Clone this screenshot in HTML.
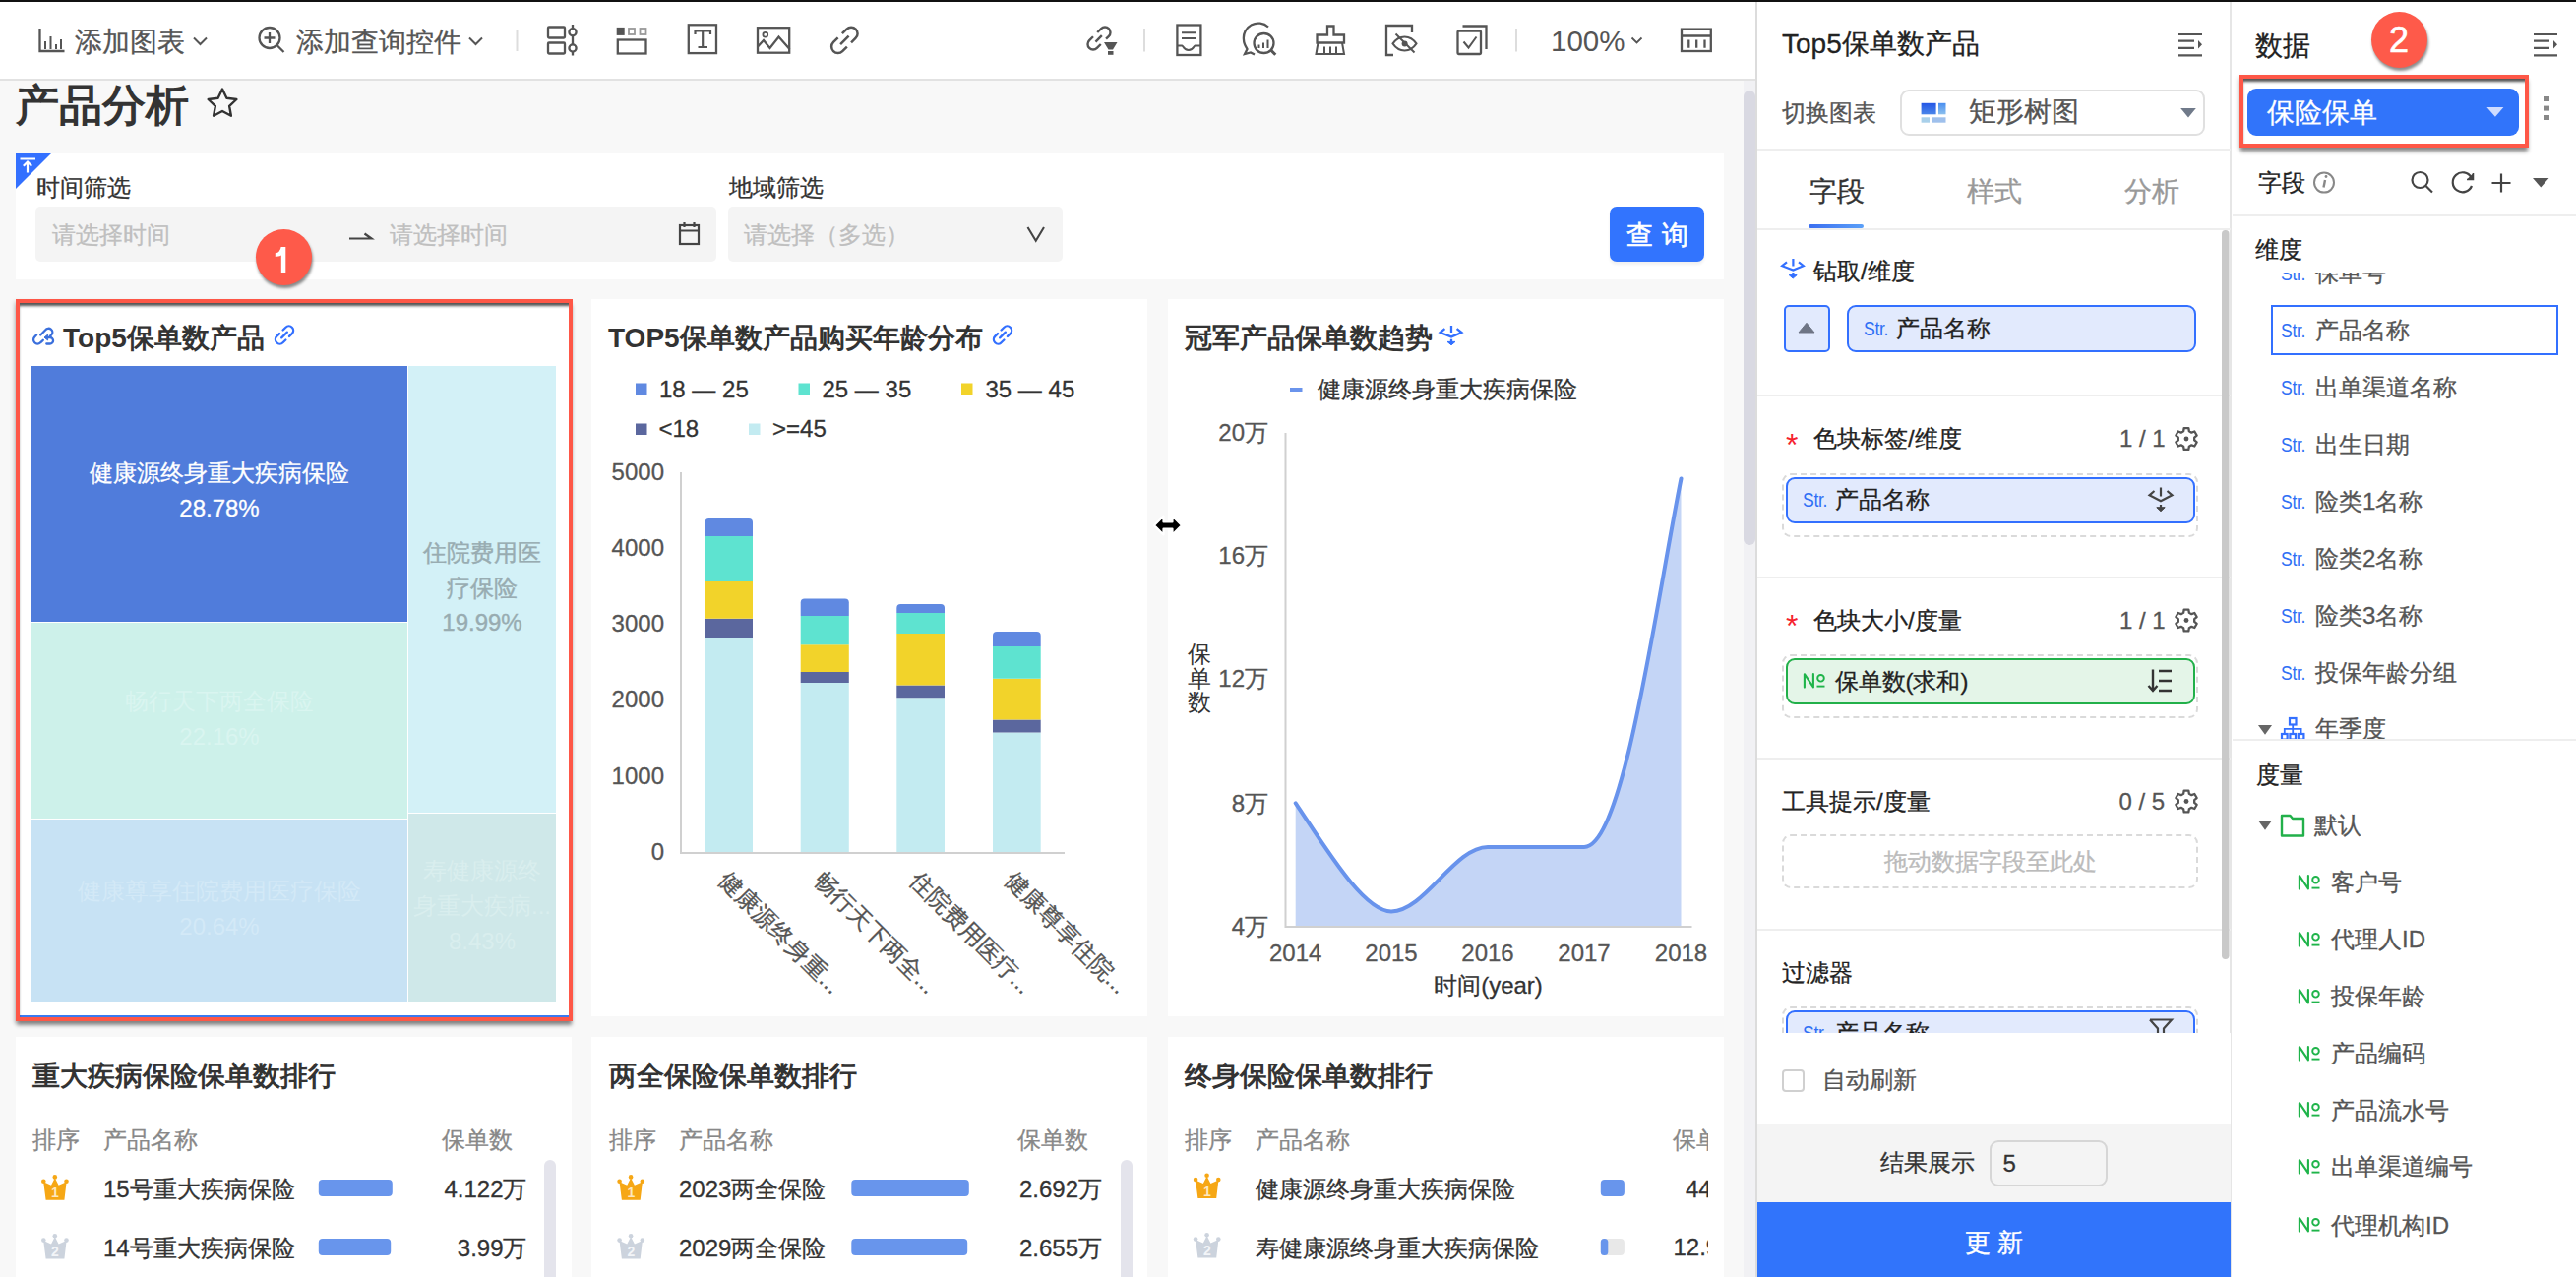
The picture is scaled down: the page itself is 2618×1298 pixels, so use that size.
<!DOCTYPE html>
<html><head><meta charset="utf-8">
<style>
*{box-sizing:border-box;margin:0;padding:0}
html,body{width:2618px;height:1298px;overflow:hidden;background:#f8f8f8;font-family:"Liberation Sans",sans-serif;color:#333}
.a{position:absolute;white-space:nowrap}
svg{position:absolute;overflow:visible}
.t24{font-size:24px;line-height:40px;-webkit-text-stroke:0.3px currentColor}
.t28{font-size:28px;line-height:40px;-webkit-text-stroke:0.3px currentColor}
.b{font-weight:bold;-webkit-text-stroke:0}
.card{position:absolute;background:#fff}
.str{color:#2f6ff5;font-size:20px;letter-spacing:-0.4px;transform:scaleX(0.88);transform-origin:0 50%}
.no{color:#1fb44a;font-size:20px}
</style></head><body>
<!-- top black line -->
<div class="a" style="left:0;top:0;width:2618px;height:2px;background:#111"></div>
<!-- toolbar -->
<div class="a" style="left:0;top:2px;width:1784px;height:78px;background:#fff"></div>
<div class="a" style="left:0;top:80px;width:1784px;height:2px;background:#e2e2e2"></div>
<svg style="left:0;top:0" width="1784" height="82" viewBox="0 0 1784 82" fill="none" stroke="#555" stroke-width="2.3">
 <!-- bar chart icon -->
 <path d="M40.5 29v23h25" />
 <path d="M46 42v8M51.5 37v13M57 45v5M62 40v10" stroke-width="2"/>
 <!-- chevron 1 -->
 <path d="M197 38.5l6.5 6.5 6.5-6.5" stroke-width="2"/>
 <!-- zoom-in -->
 <circle cx="274" cy="38.5" r="10.5"/>
 <path d="M281.5 46l7 7M274 33v11M268.5 38.5h11"/>
 <path d="M477 38.5l6.5 6.5 6.5-6.5" stroke-width="2"/>
 <!-- separator -->
 <path d="M525.5 30v22" stroke="#ddd" stroke-width="2"/>
 <!-- icon filter rows -->
 <rect x="557" y="27.5" width="17" height="11" rx="1"/>
 <rect x="557" y="43.5" width="17" height="11" rx="1"/>
 <path d="M582 25v31.5"/>
 <circle cx="582" cy="32.7" r="3.6" fill="#fff"/>
 <circle cx="582" cy="49" r="3.6" fill="#fff"/>
 <!-- tabs icon -->
 <rect x="626.7" y="27.9" width="8" height="8" fill="#555" stroke="none"/>
 <rect x="639" y="29" width="6" height="6" stroke="#999" stroke-width="1.8"/>
 <rect x="650.5" y="29" width="6" height="6" stroke="#999" stroke-width="1.8"/>
 <rect x="627.8" y="40.5" width="28.7" height="14" />
 <!-- T icon -->
 <rect x="699.8" y="25.3" width="28.2" height="28.8"/>
 <path d="M706.5 35v-3.5h15.5v3.5M714.2 31.5v16.5M709.5 48h9.5" stroke-width="2.2"/>
 <!-- image icon -->
 <rect x="770" y="28.2" width="32.2" height="25.5"/>
 <circle cx="777.8" cy="35.3" r="2.4" stroke-width="1.8"/>
 <path d="M770 47.5l6-6.5 6.5 8 9-11.5 11 12.5"/>
 <!-- link icon -->
 <g transform="translate(858 40.5) rotate(-45)">
  <path d="M-3 -6h-6.5a6.5 6.5 0 0 0 0 13h6.5M3 -6h6.5a6.5 6.5 0 0 1 0 13h-6.5M-6 0.5h12" stroke-width="2.5"/>
 </g>
 <!-- link-filter -->
 <g transform="translate(1117 39) rotate(-45)">
  <path d="M-3 -5.5h-5.5a5.5 5.5 0 0 0 0 11h5.5M3 -5.5h5.5a5.5 5.5 0 0 1 0 11h-4M-5 0h9" stroke-width="2.4"/>
 </g>
 <path d="M1122 43h13.5l-4.5 7.5h-4.5z" fill="#555" stroke="none"/>
 <rect x="1126" y="52" width="5.5" height="3.8" fill="#555" stroke="none"/>
 <path d="M1163 29v23.5" stroke="#ddd" stroke-width="2"/>
 <!-- doc -->
 <rect x="1196.4" y="25.5" width="24" height="30.5"/>
 <path d="M1201 33.3h15M1201 39h15" stroke-width="2"/>
 <path d="M1196.4 46.5h5c1 0 1.5 4.5 6.5 4.5s5.5-4.5 6.5-4.5h6" stroke-width="2"/>
 <!-- chat analysis -->
 <path d="M1289 27.5a15 15 0 0 0 -25 13c0 4 2 7 3.5 9.5l-2.5 5 6-1.5 4 2" />
 <circle cx="1284.5" cy="44" r="10"/>
 <path d="M1291.8 51.3l4.5 4.5" stroke-width="3"/>
 <path d="M1279.5 45.5v3.5M1284 43.5v5.5M1288.5 40.5v8.5" stroke-width="2"/>
 <!-- broom -->
 <path d="M1349 26.5h6.5v9h10.5v8h-27.5v-8h10.5z"/>
 <path d="M1339.5 43.5l-2 11.5h28.5l-2-11.5M1346 47.5v7.5M1352 47.5v7.5M1358 47.5v7.5" stroke-width="2"/>
 <!-- eye-off -->
 <path d="M1416 56h-7v-30h26v7" />
 <path d="M1415.5 44.4c3-4.5 7.5-7 12-7s9 2.5 12 7c-3 4.5-7.5 7-12 7s-9-2.5-12-7z" stroke-width="2"/>
 <circle cx="1427.6" cy="44.4" r="3" fill="#555" stroke="none"/>
 <path d="M1418.5 34.5l19 19" stroke-width="2"/>
 <!-- check copy -->
 <path d="M1486.5 26.5h24v23.5"/>
 <rect x="1481.5" y="31.5" width="23.5" height="23.5" rx="1"/>
 <path d="M1487.5 42.5l5 6 8-11" stroke-width="2"/>
 <path d="M1541 29v23.5" stroke="#ddd" stroke-width="2"/>
 <path d="M1658.5 38.5l5 5 5-5" stroke-width="1.8"/>
 <!-- table icon -->
 <rect x="1709" y="29.6" width="29.8" height="22.4"/>
 <path d="M1709 36.5h29.8M1716.3 40.6v8.2M1724.2 40.6v8.2M1732.5 40.6v8.2"/>
</svg>
<div class="a t28" style="left:76px;top:22.5px;color:#555">添加图表</div>
<div class="a t28" style="left:300.5px;top:22.5px;color:#555">添加查询控件</div>
<div class="a" style="left:1576px;top:21.5px;font-size:29.5px;line-height:40px;color:#555">100%</div>

<!-- main scrollbar -->
<div class="a" style="left:1772px;top:82px;width:12px;height:1216px;background:#f1f1f4"></div>
<div class="a" style="left:1772px;top:92px;width:12px;height:462px;border-radius:6px;background:#d9d9e2"></div>
<!-- page title -->
<div class="a b" style="left:16px;top:76.5px;font-size:44px;line-height:60px;color:#333">产品分析</div>
<svg style="left:0;top:0" width="300" height="140"><path d="M226 90.5l4.4 9.2 10 1.3-7.3 6.9 1.8 9.9-8.9-4.8-8.9 4.8 1.8-9.9-7.3-6.9 10-1.3z" fill="none" stroke="#333" stroke-width="2.4" stroke-linejoin="round"/></svg>
<!-- filter card -->
<div class="card" style="left:16px;top:156px;width:1736px;height:128px"></div>
<svg style="left:16px;top:156px" width="40" height="40"><path d="M0 0h36L0 36z" fill="#3370ff"/><path d="M4.5 5.5h15.5M12 19.5v-11M7.8 12.7l4.2-4.2 4.2 4.2" stroke="#fff" stroke-width="2.2" fill="none"/></svg>
<div class="a t24" style="left:37px;top:171px;color:#333">时间筛选</div>
<div class="a" style="left:36px;top:210px;width:692px;height:56px;background:#f4f4f4;border-radius:5px"></div>
<div class="a t24" style="left:52.5px;top:219px;color:#bfbfbf">请选择时间</div>
<div class="a t24" style="left:396px;top:219px;color:#bfbfbf">请选择时间</div>
<svg style="left:0;top:200px" width="760" height="80" fill="none" stroke="#444" stroke-width="2.2">
 <path d="M355 42.5h22.5l-7-5"/>
 <rect x="691" y="29" width="19" height="19" stroke-width="2.2"/>
 <path d="M691 34.5h19M695.5 26v5M705.5 26v5" stroke-width="2.2"/>
</svg>
<div class="a t24" style="left:741px;top:171px;color:#333">地域筛选</div>
<div class="a" style="left:740px;top:210px;width:340px;height:56px;background:#f4f4f4;border-radius:5px"></div>
<div class="a t24" style="left:756px;top:219px;color:#bfbfbf">请选择（多选）</div>
<svg style="left:1040px;top:225px" width="30" height="30"><path d="M4.5 6l8.25 13.8 8.25-13.8" fill="none" stroke="#444" stroke-width="2.1"/></svg>
<div class="a" style="left:1636px;top:210px;width:96px;height:56px;background:#3274fe;border-radius:7px;box-shadow:0 3px 3px rgba(0,0,0,0.06)"></div>
<div class="a" style="left:1636px;top:218.5px;width:96px;text-align:center;font-size:27px;line-height:40px;color:#fff;letter-spacing:9px;text-indent:9px;-webkit-text-stroke:0.6px #fff">查询</div>

<!-- ===== CARD 1: treemap ===== -->
<div class="card" style="left:16px;top:304px;width:566px;height:734px"></div>
<div class="a" style="left:32px;top:372px;width:382px;height:260px;background:#507cdb"></div>
<div class="a" style="left:415px;top:372px;width:150px;height:454px;background:#d3f1f7"></div>
<div class="a" style="left:32px;top:633px;width:382px;height:199px;background:#cdf1ea"></div>
<div class="a" style="left:32px;top:833px;width:382px;height:185px;background:#c7e2f4"></div>
<div class="a" style="left:415px;top:827px;width:150px;height:191px;background:#cfe8e9"></div>
<div class="a" style="left:32px;top:462.5px;width:382px;text-align:center;font-size:24px;line-height:36px;color:#fff;-webkit-text-stroke:0.3px #fff">健康源终身重大疾病保险<br>28.78%</div>
<div class="a" style="left:415px;top:544px;width:150px;text-align:center;font-size:24px;line-height:35.7px;color:#98acb1;white-space:normal;-webkit-text-stroke:0.4px currentColor">住院费用医<br>疗保险<br>19.99%</div>
<div class="a" style="left:32px;top:694.5px;width:382px;text-align:center;font-size:24px;line-height:36px;color:#d9f5f0">畅行天下两全保险<br>22.16%</div>
<div class="a" style="left:32px;top:888px;width:382px;text-align:center;font-size:24px;line-height:36px;color:#d3e9f7">健康尊享住院费用医疗保险<br>20.64%</div>
<div class="a" style="left:415px;top:867px;width:150px;text-align:center;font-size:24px;line-height:36px;color:#d9eeee">寿健康源终<br>身重大疾病...<br>8.43%</div>
<div class="a" style="left:20px;top:1032px;width:558px;height:2px;background:#3a7af0"></div>
<div class="a b t28" style="left:64px;top:323.5px;color:#333">Top5保单数产品</div>
<svg style="left:0;top:300px" width="320" height="70" fill="none" stroke="#3a6fdc" stroke-width="2.3" stroke-linecap="round">
 <path d="M41.2 40.5L46.3 35.3a3.9 3.9 0 0 1 6.2 4.8L51 41.6"/>
 <path d="M37.2 40.2L35.3 42.4a4 4 0 0 0 5.8 5.9L43.8 45.8"/>
 <path d="M49 43h1.8a3.2 3.2 0 0 1 0 6.5h-3.5"/><path d="M48.3 40.3l-3.3 2.8 3.3 2.6z" fill="#3a6fdc" stroke-width="1"/>
 <g transform="translate(289 40.5) rotate(-45)"><path d="M-2.5 -4.5h-4a4.5 4.5 0 0 0 0 9h4M2.5 -4.5h4a4.5 4.5 0 0 1 0 9h-4M-4 0h8" stroke="#3370ff" stroke-width="2.3"/></g>
</svg>
<!-- red highlight -->
<div class="a" style="left:16px;top:304px;width:566px;height:734px;border:4px solid #fe5747;box-shadow:0 5px 4px -1px rgba(0,0,0,0.42), -2px 2px 4px rgba(0,0,0,0.12), inset 2px 6px 3px -3px rgba(0,0,0,0.68)"></div>

<!-- ===== CARD 2: bar chart ===== -->
<div class="card" style="left:601px;top:304px;width:565px;height:729px"></div>
<div class="a b t28" style="left:618px;top:323.5px;color:#333">TOP5保单数产品购买年龄分布</div>
<svg style="left:1000px;top:320px" width="50" height="50"><g transform="translate(19 20.5) rotate(-45)"><path d="M-2.5 -4.5h-4a4.5 4.5 0 0 0 0 9h4M2.5 -4.5h4a4.5 4.5 0 0 1 0 9h-4M-4 0h8" fill="none" stroke="#3370ff" stroke-width="2.3" stroke-linecap="round"/></g></svg>
<svg style="left:0;top:0" width="1200" height="1040">
 <rect x="646" y="389.5" width="11.5" height="11.5" fill="#6089e1"/>
 <rect x="811.5" y="389.5" width="11.5" height="11.5" fill="#5ee3d0"/>
 <rect x="977" y="389.5" width="11.5" height="11.5" fill="#f2d32a"/>
 <rect x="646" y="430.5" width="11.5" height="11.5" fill="#5b679e"/>
 <rect x="761" y="430.5" width="11.5" height="11.5" fill="#c3ebf1"/>
 <path d="M692 480v387M691 867h391" stroke="#d0d0d0" stroke-width="2" fill="none"/>
 <g>
  <path d="M716.5 649h48.5v217h-48.5z" fill="#c3ebf1"/><path d="M716.5 628.7h48.5v20.3h-48.5z" fill="#5b679e"/><path d="M716.5 591h48.5v37.7h-48.5z" fill="#f2d32a"/><path d="M716.5 545h48.5v46h-48.5z" fill="#5ee3d0"/><path d="M716.5 545v-14a4 4 0 0 1 4-4h40.5a4 4 0 0 1 4 4v14z" fill="#6089e1"/>
  <path d="M813.7 694h49.1v172h-49.1z" fill="#c3ebf1"/><path d="M813.7 683h49.1v11h-49.1z" fill="#5b679e"/><path d="M813.7 655.3h49.1v27.7h-49.1z" fill="#f2d32a"/><path d="M813.7 626h49.1v29.3h-49.1z" fill="#5ee3d0"/><path d="M813.7 626v-13.5a4 4 0 0 1 4-4h41.1a4 4 0 0 1 4 4v13.5z" fill="#6089e1"/>
  <path d="M911.3 709.2h48.7v156.8h-48.7z" fill="#c3ebf1"/><path d="M911.3 696.4h48.7v12.8h-48.7z" fill="#5b679e"/><path d="M911.3 644h48.7v52.4h-48.7z" fill="#f2d32a"/><path d="M911.3 623h48.7v21h-48.7z" fill="#5ee3d0"/><path d="M911.3 623v-5a4 4 0 0 1 4-4h40.7a4 4 0 0 1 4 4v5z" fill="#6089e1"/>
  <path d="M1009 744.6h48.7v121.4h-48.7z" fill="#c3ebf1"/><path d="M1009 731.5h48.7v13.1h-48.7z" fill="#5b679e"/><path d="M1009 689.8h48.7v41.7h-48.7z" fill="#f2d32a"/><path d="M1009 657h48.7v32.8h-48.7z" fill="#5ee3d0"/><path d="M1009 657v-11a4 4 0 0 1 4-4h40.7a4 4 0 0 1 4 4v11z" fill="#6089e1"/>
 </g>
</svg>
<div class="a t24" style="left:670px;top:375.5px;color:#333">18 — 25</div>
<div class="a t24" style="left:835.5px;top:375.5px;color:#333">25 — 35</div>
<div class="a t24" style="left:1001.5px;top:375.5px;color:#333">35 — 45</div>
<div class="a t24" style="left:669.5px;top:416px;color:#333">&lt;18</div>
<div class="a t24" style="left:785px;top:416px;color:#333">&gt;=45</div>
<div class="a t24" style="left:575px;width:100px;text-align:right;top:459.5px;color:#555">5000</div>
<div class="a t24" style="left:575px;width:100px;text-align:right;top:536.5px;color:#555">4000</div>
<div class="a t24" style="left:575px;width:100px;text-align:right;top:614px;color:#555">3000</div>
<div class="a t24" style="left:575px;width:100px;text-align:right;top:691px;color:#555">2000</div>
<div class="a t24" style="left:575px;width:100px;text-align:right;top:768.5px;color:#555">1000</div>
<div class="a t24" style="left:575px;width:100px;text-align:right;top:846px;color:#555">0</div>
<div class="a t24" style="left:735px;top:870px;color:#555;transform-origin:0 50%;transform:rotate(45deg)">健康源终身重...</div>
<div class="a t24" style="left:832px;top:870px;color:#555;transform-origin:0 50%;transform:rotate(45deg)">畅行天下两全...</div>
<div class="a t24" style="left:929px;top:870px;color:#555;transform-origin:0 50%;transform:rotate(45deg)">住院费用医疗...</div>
<div class="a t24" style="left:1026px;top:870px;color:#555;transform-origin:0 50%;transform:rotate(45deg)">健康尊享住院...</div>

<!-- ===== CARD 3: line chart ===== -->
<div class="card" style="left:1187px;top:304px;width:565px;height:729px"></div>
<div class="a b t28" style="left:1203.5px;top:323.5px;color:#333">冠军产品保单数趋势</div>
<svg style="left:1450px;top:320px" width="50" height="40" fill="none" stroke="#3370ff" stroke-width="2.3"><g transform="translate(25 11)"><path d="M-6.6 3.2L-11.3 7 0 11.4 10.4 7 5.6 3.2M0 0v7M0 13.8v3"/><path d="M-4 16.4h8l-4 3.4z" fill="#3370ff" stroke-width="1"/></g></svg>
<svg style="left:0;top:0" width="1760" height="1040">
 <rect x="1311" y="394" width="12.5" height="4" fill="#6a94ec"/>
 <path d="M1306.5 440v502M1305.5 942h414" stroke="#d0d0d0" stroke-width="2" fill="none"/>
 <path d="M1316.7 816.3C1345 858 1385 926.4 1414 926.4C1448 926.4 1478 861 1512 861L1610 861C1650 861 1682 620 1708.5 486.5L1708.5 941L1316.7 941Z" fill="#c4d5f6"/>
 <path d="M1316.7 816.3C1345 858 1385 926.4 1414 926.4C1448 926.4 1478 861 1512 861L1610 861C1650 861 1682 620 1708.5 486.5" fill="none" stroke="#6893ec" stroke-width="4" stroke-linecap="round"/>
</svg>
<div class="a t24" style="left:1338.5px;top:376px;color:#333">健康源终身重大疾病保险</div>
<div class="a t24" style="left:1189px;width:100px;text-align:right;top:419.5px;color:#555">20万</div>
<div class="a t24" style="left:1189px;width:100px;text-align:right;top:544.5px;color:#555">16万</div>
<div class="a t24" style="left:1189px;width:100px;text-align:right;top:670px;color:#555">12万</div>
<div class="a t24" style="left:1189px;width:100px;text-align:right;top:797px;color:#555">8万</div>
<div class="a t24" style="left:1189px;width:100px;text-align:right;top:922px;color:#555">4万</div>
<div class="a" style="left:1207px;top:653px;width:24px;font-size:24px;line-height:24.5px;color:#333;white-space:normal">保单数</div>
<div class="a t24" style="left:1266.7px;width:100px;text-align:center;top:949px;color:#555">2014</div>
<div class="a t24" style="left:1364px;width:100px;text-align:center;top:949px;color:#555">2015</div>
<div class="a t24" style="left:1462px;width:100px;text-align:center;top:949px;color:#555">2016</div>
<div class="a t24" style="left:1560px;width:100px;text-align:center;top:949px;color:#555">2017</div>
<div class="a t24" style="left:1658.5px;width:100px;text-align:center;top:949px;color:#555">2018</div>
<div class="a t24" style="left:1412.5px;width:200px;text-align:center;top:981.5px;color:#333">时间(year)</div>
<!-- resize cursor -->
<svg style="left:1168px;top:518px" width="40" height="34"><path d="M5 16l9.5-9.5v6h9v-6l9.5 9.5-9.5 9.5v-6h-9v6z" fill="#000" stroke="#fff" stroke-width="2.2" stroke-linejoin="round"/></svg>

<!-- ===== bottom cards ===== -->
<div class="card" style="left:16px;top:1054px;width:565px;height:260px"></div>
<div class="card" style="left:601px;top:1054px;width:565px;height:260px"></div>
<div class="card" style="left:1187px;top:1054px;width:565px;height:260px"></div>
<div class="a b t28" style="left:33px;top:1074px;color:#333">重大疾病保险保单数排行</div>
<div class="a b t28" style="left:618.5px;top:1074px;color:#333">两全保险保单数排行</div>
<div class="a b t28" style="left:1203.5px;top:1074px;color:#333">终身保险保单数排行</div>
<div class="a t24" style="left:33px;top:1139px;color:#888">排序</div>
<div class="a t24" style="left:105px;top:1139px;color:#888">产品名称</div>
<div class="a t24" style="left:448.5px;top:1139px;color:#888">保单数</div>
<div class="a t24" style="left:618.5px;top:1139px;color:#888">排序</div>
<div class="a t24" style="left:690px;top:1139px;color:#888">产品名称</div>
<div class="a t24" style="left:1033.5px;top:1139px;color:#888">保单数</div>
<div class="a t24" style="left:1203.5px;top:1139px;color:#888">排序</div>
<div class="a t24" style="left:1276px;top:1139px;color:#888">产品名称</div>
<div class="a" style="left:1187px;top:1100px;width:549px;height:200px;overflow:hidden">
 <div class="a t24" style="left:512.5px;top:39px;color:#888">保单数</div>
 <div class="a t24" style="left:526px;top:88.5px;color:#333">44.5万</div>
 <div class="a t24" style="left:513.5px;top:148px;color:#333">12.9万</div>
</div>
<div class="a" style="left:553px;top:1178.5px;width:12px;height:140px;border-radius:6px;background:#e4e4ec"></div>
<div class="a" style="left:1139px;top:1178.5px;width:12px;height:140px;border-radius:6px;background:#e4e4ec"></div>
<svg style="left:0;top:0" width="1760" height="1298">
 <defs>
  <g id="crown"><circle cx="13.8" cy="2.2" r="2.3"/><circle cx="2.3" cy="6.6" r="2.3"/><circle cx="25.5" cy="6.6" r="2.3"/><path d="M2.2 7L10 10.5 13.8 3 17.6 10.5 25.6 7 23.4 25.6H4.6Z"/></g>
 </defs>
 <use href="#crown" x="42" y="1194.2" fill="#f6a715"/>
 <use href="#crown" x="42" y="1254" fill="#ccd3dd"/>
 <use href="#crown" x="627.3" y="1194.2" fill="#f6a715"/>
 <use href="#crown" x="627.3" y="1254" fill="#ccd3dd"/>
 <use href="#crown" x="1212.8" y="1192.5" fill="#f6a715"/>
 <use href="#crown" x="1212.8" y="1253" fill="#ccd3dd"/>
 <rect x="323.8" y="1199" width="75" height="17" rx="4" fill="#6895ec"/>
 <rect x="323.8" y="1259" width="73.4" height="17" rx="4" fill="#6895ec"/>
 <rect x="865.3" y="1199" width="119.5" height="17" rx="4" fill="#6895ec"/>
 <rect x="865.3" y="1259" width="117.9" height="17" rx="4" fill="#6895ec"/>
 <rect x="1626.8" y="1199" width="24.1" height="17" rx="4" fill="#6895ec"/>
 <rect x="1626.8" y="1259" width="24.1" height="17" rx="4" fill="#e8e8e8"/>
 <rect x="1626.8" y="1259" width="7.5" height="17" rx="3.5" fill="#6895ec"/>
</svg>
<div class="a b" style="left:42px;top:1202px;width:28px;text-align:center;font-size:14px;line-height:20px;color:#fde7c0">1</div>
<div class="a b" style="left:627.3px;top:1202px;width:28px;text-align:center;font-size:14px;line-height:20px;color:#fde7c0">1</div>
<div class="a b" style="left:1212.8px;top:1200.5px;width:28px;text-align:center;font-size:14px;line-height:20px;color:#fde7c0">1</div>
<div class="a b" style="left:42px;top:1262px;width:28px;text-align:center;font-size:14px;line-height:20px;color:#f3f5f8">2</div>
<div class="a b" style="left:627.3px;top:1262px;width:28px;text-align:center;font-size:14px;line-height:20px;color:#f3f5f8">2</div>
<div class="a b" style="left:1212.8px;top:1261px;width:28px;text-align:center;font-size:14px;line-height:20px;color:#f3f5f8">2</div>
<div class="a t24" style="left:105px;top:1189px;color:#333">15号重大疾病保险</div>
<div class="a t24" style="left:105px;top:1248.5px;color:#333">14号重大疾病保险</div>
<div class="a t24" style="left:400px;width:135.5px;text-align:right;top:1189px;color:#333">4.122万</div>
<div class="a t24" style="left:400px;width:135.5px;text-align:right;top:1248.5px;color:#333">3.99万</div>
<div class="a t24" style="left:690px;top:1189px;color:#333">2023两全保险</div>
<div class="a t24" style="left:690px;top:1248.5px;color:#333">2029两全保险</div>
<div class="a t24" style="left:985px;width:135px;text-align:right;top:1189px;color:#333">2.692万</div>
<div class="a t24" style="left:985px;width:135px;text-align:right;top:1248.5px;color:#333">2.655万</div>
<div class="a t24" style="left:1276px;top:1188.5px;color:#333">健康源终身重大疾病保险</div>
<div class="a t24" style="left:1276px;top:1248.5px;color:#333">寿健康源终身重大疾病保险</div>
<!-- badge 1 -->
<div class="a" style="left:259.6px;top:233.3px;width:57px;height:57px;border-radius:50%;background:#fe5a4a;box-shadow:1px 3px 3px rgba(0,0,0,0.45)"></div>
<svg style="left:0;top:0" width="340" height="300"><path d="M285.6 251H290.3V277H285.8V259.6C284 260.6 282 261 279.8 261V257.3C282.8 257.1 284.6 255.2 285.6 251Z" fill="#fff"/></svg>

<!-- ===== MIDDLE PANEL ===== -->
<div class="a" style="left:1784px;top:2px;width:2px;height:1296px;background:#dcdcdc"></div>
<div class="a" style="left:1786px;top:2px;width:481px;height:1296px;background:#fff"></div>
<div class="a" style="left:2266px;top:2px;width:2px;height:1296px;background:#e6e6e6"></div>
<div class="a t28" style="left:1811px;top:25px;color:#222">Top5保单数产品</div>
<svg style="left:2210px;top:30px" width="32" height="32" fill="none" stroke="#555" stroke-width="2.2"><path d="M4 5h24M4 11.7h16M4 18.9h16M4 26.3h24"/><path d="M24 11l4 4.3-4 4.3z" fill="#555" stroke="none"/></svg>
<div class="a t24" style="left:1811px;top:94.5px;color:#555">切换图表</div>
<div class="a" style="left:1931px;top:90.5px;width:310px;height:47px;border:2px solid #e0e0e0;border-radius:9px"></div>
<svg style="left:1950px;top:100px" width="32" height="30"><defs><linearGradient id="tg1" x1="0" y1="0" x2="0" y2="1"><stop offset="0" stop-color="#2456e6"/><stop offset="1" stop-color="#4a86ea"/></linearGradient><linearGradient id="tg2" x1="0" y1="0" x2="0" y2="1"><stop offset="0" stop-color="#4a8ef0"/><stop offset="1" stop-color="#8cc0ee"/></linearGradient></defs>
 <rect x="2.6" y="4.8" width="15" height="11.5" fill="url(#tg1)"/><rect x="20" y="4.8" width="7.5" height="11.5" fill="url(#tg2)"/><rect x="2.6" y="19.3" width="8.4" height="5.4" fill="#a9d0ea"/><rect x="13" y="19.3" width="14.5" height="5.4" fill="#9fc0ec"/></svg>
<div class="a t28" style="left:2001px;top:94px;color:#555">矩形树图</div>
<svg style="left:2210px;top:104px" width="30" height="20"><path d="M6.2 6h15.6l-7.8 9.6z" fill="#707a8a"/></svg>
<div class="a" style="left:1786px;top:151px;width:481px;height:2px;background:#eee"></div>
<div class="a t28" style="left:1838.5px;top:174.5px;color:#333">字段</div>
<div class="a t28" style="left:1998.5px;top:174.5px;color:#999">样式</div>
<div class="a t28" style="left:2159px;top:174.5px;color:#999">分析</div>
<div class="a" style="left:1838px;top:228px;width:56px;height:4px;border-radius:2px;background:linear-gradient(90deg,#3b6ef0,#5ba0f8)"></div>
<div class="a" style="left:1786px;top:232px;width:481px;height:2px;background:#eee"></div>
<!-- scroll area -->
<div class="a" style="left:1786px;top:234px;width:481px;height:816px;overflow:hidden">
 <div style="position:absolute;left:-1786px;top:-234px;width:2618px;height:1298px">
 <svg style="left:0;top:0" width="2300" height="1100" fill="none">
  <g stroke="#3370ff" stroke-width="2.2"><path d="M1816 266.4l-4.8 3.8 11.2 4.4 10.4-4.4-4.8-3.8M1822.4 263v7.5M1822.4 277v3"/><path d="M1818.2 279.6h8l-4 3.4z" fill="#3370ff" stroke-width="1"/></g>
 </svg>
 <div class="a t24" style="left:1843px;top:256px;color:#222">钻取/维度</div>
 <div class="a" style="left:1812.5px;top:310px;width:47.5px;height:47.5px;border:2px solid #3370ff;border-radius:5px;background:#e2eafd"></div>
 <svg style="left:1820px;top:320px" width="30" height="25"><path d="M8 18l8-9.7 8 9.7z" fill="#6e7585" stroke="#6e7585" stroke-width="1" stroke-linejoin="round"/></svg>
 <div class="a" style="left:1876.5px;top:310px;width:355px;height:47.5px;border:2px solid #3370ff;border-radius:9px;background:#e2eafd"></div>
 <div class="a str" style="left:1893.5px;top:314px;line-height:40px">Str.</div>
 <div class="a t24" style="left:1927px;top:314px;color:#222">产品名称</div>
 <div class="a" style="left:1786px;top:401px;width:481px;height:2px;background:#eee"></div>
 <div class="a" style="left:1815px;top:432px;font-size:32px;line-height:40px;color:#f5222d">*</div>
 <div class="a t24" style="left:1843px;top:426px;color:#222">色块标签/维度</div>
 <div class="a t24" style="left:2154px;top:426px;color:#555">1 / 1</div>
 <div class="a" style="left:1811px;top:480.5px;width:423px;height:65.5px;border:2px dashed #dadada;border-radius:9px"></div>
 <div class="a" style="left:1814.5px;top:484.5px;width:416px;height:47.5px;border:2px solid #3370ff;border-radius:9px;background:#e2eafd"></div>
 <div class="a str" style="left:1831.5px;top:488px;line-height:40px">Str.</div>
 <div class="a t24" style="left:1864.5px;top:488px;color:#222">产品名称</div>
 <div class="a" style="left:1786px;top:585.5px;width:481px;height:2px;background:#eee"></div>
 <div class="a" style="left:1815px;top:616px;font-size:32px;line-height:40px;color:#f5222d">*</div>
 <div class="a t24" style="left:1843px;top:610.5px;color:#222">色块大小/度量</div>
 <div class="a t24" style="left:2154px;top:610.5px;color:#555">1 / 1</div>
 <div class="a" style="left:1811px;top:664.5px;width:423px;height:65px;border:2px dashed #dadada;border-radius:9px"></div>
 <div class="a" style="left:1814.5px;top:668.5px;width:416px;height:47px;border:2px solid #22b04a;border-radius:9px;background:#e4f5e8"></div>
 <svg style="left:1831.0px;top:683.0px" width="26" height="18" fill="none" stroke="#1fb44a" stroke-width="2.1"><path d="M2.9 15.6V2.2L11.9 15.4V2" stroke-linejoin="round" stroke-linecap="round"/><circle cx="19.5" cy="6.3" r="3.3" stroke-width="1.9"/><path d="M15.5 14.6h8" stroke-width="1.9"/></svg>
 <div class="a t24" style="left:1864.5px;top:672.5px;color:#222">保单数(求和)</div>
 <div class="a" style="left:1786px;top:770px;width:481px;height:2px;background:#eee"></div>
 <div class="a t24" style="left:1811px;top:794.5px;color:#222">工具提示/度量</div>
 <div class="a t24" style="left:2153.5px;top:794.5px;color:#555">0 / 5</div>
 <div class="a" style="left:1811px;top:848px;width:423px;height:55px;border:2px dashed #dadada;border-radius:9px"></div>
 <div class="a t24" style="left:1811px;width:423px;text-align:center;top:855.5px;color:#bbb">拖动数据字段至此处</div>
 <div class="a" style="left:1786px;top:943.5px;width:481px;height:2px;background:#eee"></div>
 <div class="a t24" style="left:1811px;top:969px;color:#222">过滤器</div>
 <div class="a" style="left:1811px;top:1022.5px;width:423px;height:65px;border:2px dashed #dadada;border-radius:9px"></div>
 <div class="a" style="left:1814.5px;top:1026.5px;width:416px;height:47px;border:2px solid #3370ff;border-radius:9px;background:#e2eafd"></div>
 <div class="a str" style="left:1831.5px;top:1030px;line-height:40px">Str.</div>
 <div class="a t24" style="left:1864.5px;top:1030px;color:#222">产品名称</div>
 <svg style="left:0;top:0" width="2300" height="1100" fill="none" stroke="#555" stroke-width="2.2">
  </svg>
 </div>
</div>
<svg style="left:0;top:0" width="2300" height="1298" fill="none" stroke="#555" stroke-width="2.2">
 <defs>
  <g id="gearI"><path d="M-2.85 -7.79 L-2.31 -10.96 L2.31 -10.96 L2.85 -7.79 L5.32 -6.37 L8.33 -7.48 L10.65 -3.48 L8.18 -1.43 L8.18 1.43 L10.65 3.48 L8.33 7.48 L5.32 6.37 L2.85 7.79 L2.31 10.96 L-2.31 10.96 L-2.85 7.79 L-5.32 6.37 L-8.33 7.48 L-10.65 3.48 L-8.18 1.43 L-8.18 -1.43 L-10.65 -3.48 L-8.33 -7.48 L-5.32 -6.37Z" stroke-linejoin="round" stroke-width="2.3"/><circle r="2.4" fill="#555" stroke="none"/></g>
  <g id="drillI"><path d="M-6.5 -8.5l-5 4.3 11.5 6 11.5-6-5-4.3M0 -12v9M0 5.5v3"/><path d="M-4.2 8.2h8.4l-4.2 4z" fill="#444" stroke="#444" stroke-width="1"/></g>
 </defs>
 <use href="#gearI" x="2222" y="446"/>
 <use href="#gearI" x="2222" y="630.5"/>
 <use href="#gearI" x="2222" y="814.5"/>
 <use href="#drillI" x="2196" y="507.5" stroke="#444"/>
 <!-- sort icon -->
 <path d="M2188 680.5v21M2183.5 697l4.5 5 4.5-5M2194 682h13M2194 692h13M2194 702h13" stroke="#333" stroke-width="2.4"/>
 <!-- filter icon (clipped) -->
 <path d="M2185 1036.5h22l-8 9v8M2185 1036.5l8 9v8" stroke="#444" stroke-width="2.2"/>
 <!-- middle scrollbar -->
 <rect x="2258" y="234" width="7.5" height="741" rx="3.7" fill="#c9c9c9" stroke="none"/>
</svg>
<div class="a" style="left:1786px;top:1050px;width:481px;height:92px;background:#fff"></div>
<div class="a" style="left:1811px;top:1087px;width:23px;height:23px;border:2px solid #d0d0d0;border-radius:4px;background:#fff"></div>
<div class="a t24" style="left:1852px;top:1078px;color:#555">自动刷新</div>
<div class="a" style="left:1786px;top:1142px;width:481px;height:80px;background:#f4f4f4"></div>
<div class="a t24" style="left:1911px;top:1162px;color:#333">结果展示</div>
<div class="a" style="left:2022px;top:1158.5px;width:119.5px;height:47px;border:2px solid #d6d6d6;border-radius:9px"></div>
<div class="a t24" style="left:2035.5px;top:1162.5px;color:#333">5</div>
<div class="a" style="left:1786px;top:1222px;width:481px;height:76px;background:#3174fb"></div>
<div class="a" style="left:1786px;top:1243px;width:481px;text-align:center;font-size:25.5px;line-height:40px;color:#fff;letter-spacing:7px;text-indent:7px;-webkit-text-stroke:0.4px #fff">更新</div>

<!-- ===== RIGHT PANEL ===== -->
<div class="a" style="left:2268px;top:2px;width:350px;height:1296px;background:#fff"></div>
<div class="a t28" style="left:2292px;top:27px;color:#222">数据</div>
<svg style="left:2571px;top:30px" width="32" height="32" fill="none" stroke="#555" stroke-width="2.2"><path d="M4 5h24M4 11.7h16M4 18.9h16M4 26.3h24"/><path d="M24 11l4 4.3-4 4.3z" fill="#555" stroke="none"/></svg>
<div class="a" style="left:2284px;top:90px;width:276px;height:47.5px;background:#3174fa;border-radius:9px"></div>
<div class="a t28" style="left:2304px;top:94.5px;color:#fff">保险保单</div>
<svg style="left:2520px;top:100px" width="30" height="25"><path d="M7.4 8.9h17l-8.5 9.8z" fill="#cfdcff"/></svg>
<svg style="left:2580px;top:90px" width="16" height="40"><rect x="5" y="8" width="6" height="5" fill="#888"/><rect x="5" y="17.6" width="6" height="5" fill="#888"/><rect x="5" y="27" width="6" height="5" fill="#888"/></svg>
<div class="a" style="left:2276px;top:76px;width:294px;height:73.5px;border:4px solid #fe5747;box-shadow:0 5px 4px -1px rgba(0,0,0,0.42), -2px 2px 4px rgba(0,0,0,0.12), inset 2px 6px 3px -3px rgba(0,0,0,0.68)"></div>
<div class="a t24" style="left:2295px;top:166px;color:#222">字段</div>
<svg style="left:0;top:0" width="2618" height="1298" fill="none" stroke="#444" stroke-width="2.2">
 <circle cx="2362" cy="185.6" r="10" stroke="#888" stroke-width="2"/>
 <path d="M2363 183l-1.5 7.5" stroke="#888" stroke-width="2.4"/><circle cx="2364" cy="179.5" r="1.4" fill="#888" stroke="none"/>
 <circle cx="2459.5" cy="183" r="8"/><path d="M2465.5 189l6.5 6.5"/>
 <path d="M2511.5 180.5a10 10 0 1 0 0.5 8.5"/><path d="M2513.5 176v6.5h-6.5" fill="#444" stroke-width="1.5"/>
 <path d="M2532.5 186h19M2542 176.5v19"/>
 <path d="M2574 181h16.5l-8.25 9.5z" fill="#555" stroke="none"/>
</svg>
<div class="a" style="left:2269px;top:218px;width:349px;height:2px;background:#eee"></div>
<div class="a t24" style="left:2292px;top:234px;color:#222">维度</div>
<div class="a" style="left:2269px;top:277px;width:349px;height:474px;overflow:hidden">
 <div style="position:absolute;left:-2269px;top:-277px;width:2618px;height:1298px">
  <div class="a" style="left:2308px;top:309.5px;width:292px;height:51px;border:2px solid #3370ff"></div>
  <div class="a str" style="left:2318px;top:257.5px;line-height:40px">Str.</div><div class="a t24" style="left:2353px;top:257.5px;color:#555">保单号</div>
  <div class="a str" style="left:2318px;top:315.5px;line-height:40px">Str.</div><div class="a t24" style="left:2353px;top:315.5px;color:#555">产品名称</div>
  <div class="a str" style="left:2318px;top:373.5px;line-height:40px">Str.</div><div class="a t24" style="left:2353px;top:373.5px;color:#555">出单渠道名称</div>
  <div class="a str" style="left:2318px;top:431.5px;line-height:40px">Str.</div><div class="a t24" style="left:2353px;top:431.5px;color:#555">出生日期</div>
  <div class="a str" style="left:2318px;top:489.5px;line-height:40px">Str.</div><div class="a t24" style="left:2353px;top:489.5px;color:#555">险类1名称</div>
  <div class="a str" style="left:2318px;top:548px;line-height:40px">Str.</div><div class="a t24" style="left:2353px;top:548px;color:#555">险类2名称</div>
  <div class="a str" style="left:2318px;top:606px;line-height:40px">Str.</div><div class="a t24" style="left:2353px;top:606px;color:#555">险类3名称</div>
  <div class="a str" style="left:2318px;top:664px;line-height:40px">Str.</div><div class="a t24" style="left:2353px;top:664px;color:#555">投保年龄分组</div>
  <svg style="left:0;top:0" width="2618" height="800"><path d="M2295 737h14l-7 9.7z" fill="#666"/>
   <g fill="none" stroke="#3370ff" stroke-width="2.2"><rect x="2327" y="730" width="6.5" height="6.5"/><rect x="2319" y="746" width="5.6" height="5.6"/><rect x="2327.4" y="746" width="5.6" height="5.6"/><rect x="2335.8" y="746" width="5.6" height="5.6"/>
   <path d="M2330.2 736.5v4.3M2321.8 746v-5.2h16.8v5.2M2330.2 740.8v5.2" stroke-width="1.8"/></g>
  </svg>
  <div class="a t24" style="left:2353px;top:721px;color:#555">年季度</div>
 </div>
</div>
<div class="a" style="left:2269px;top:751px;width:349px;height:2px;background:#eee"></div>
<div class="a t24" style="left:2292.5px;top:768px;color:#222">度量</div>
<svg style="left:0;top:0" width="2618" height="900"><path d="M2295 834h14l-7 9.7z" fill="#666"/><path d="M2319 829h8.5l2.5 3h11v17.5h-22z" fill="none" stroke="#22b04a" stroke-width="2.4" stroke-linejoin="round"/></svg>
<div class="a t24" style="left:2352px;top:819px;color:#555">默认</div>
<svg style="left:2333.5px;top:887.5px" width="26" height="18" fill="none" stroke="#1fb44a" stroke-width="2.1"><path d="M2.9 15.6V2.2L11.9 15.4V2" stroke-linejoin="round" stroke-linecap="round"/><circle cx="19.5" cy="6.3" r="3.3" stroke-width="1.9"/><path d="M15.5 14.6h8" stroke-width="1.9"/></svg><div class="a t24" style="left:2369px;top:877px;color:#555">客户号</div>
<svg style="left:2333.5px;top:945.5px" width="26" height="18" fill="none" stroke="#1fb44a" stroke-width="2.1"><path d="M2.9 15.6V2.2L11.9 15.4V2" stroke-linejoin="round" stroke-linecap="round"/><circle cx="19.5" cy="6.3" r="3.3" stroke-width="1.9"/><path d="M15.5 14.6h8" stroke-width="1.9"/></svg><div class="a t24" style="left:2369px;top:935px;color:#555">代理人ID</div>
<svg style="left:2333.5px;top:1003.5px" width="26" height="18" fill="none" stroke="#1fb44a" stroke-width="2.1"><path d="M2.9 15.6V2.2L11.9 15.4V2" stroke-linejoin="round" stroke-linecap="round"/><circle cx="19.5" cy="6.3" r="3.3" stroke-width="1.9"/><path d="M15.5 14.6h8" stroke-width="1.9"/></svg><div class="a t24" style="left:2369px;top:993px;color:#555">投保年龄</div>
<svg style="left:2333.5px;top:1061.5px" width="26" height="18" fill="none" stroke="#1fb44a" stroke-width="2.1"><path d="M2.9 15.6V2.2L11.9 15.4V2" stroke-linejoin="round" stroke-linecap="round"/><circle cx="19.5" cy="6.3" r="3.3" stroke-width="1.9"/><path d="M15.5 14.6h8" stroke-width="1.9"/></svg><div class="a t24" style="left:2369px;top:1051px;color:#555">产品编码</div>
<svg style="left:2333.5px;top:1119.0px" width="26" height="18" fill="none" stroke="#1fb44a" stroke-width="2.1"><path d="M2.9 15.6V2.2L11.9 15.4V2" stroke-linejoin="round" stroke-linecap="round"/><circle cx="19.5" cy="6.3" r="3.3" stroke-width="1.9"/><path d="M15.5 14.6h8" stroke-width="1.9"/></svg><div class="a t24" style="left:2369px;top:1108.5px;color:#555">产品流水号</div>
<svg style="left:2333.5px;top:1176.5px" width="26" height="18" fill="none" stroke="#1fb44a" stroke-width="2.1"><path d="M2.9 15.6V2.2L11.9 15.4V2" stroke-linejoin="round" stroke-linecap="round"/><circle cx="19.5" cy="6.3" r="3.3" stroke-width="1.9"/><path d="M15.5 14.6h8" stroke-width="1.9"/></svg><div class="a t24" style="left:2369px;top:1166px;color:#555">出单渠道编号</div>
<svg style="left:2333.5px;top:1236.0px" width="26" height="18" fill="none" stroke="#1fb44a" stroke-width="2.1"><path d="M2.9 15.6V2.2L11.9 15.4V2" stroke-linejoin="round" stroke-linecap="round"/><circle cx="19.5" cy="6.3" r="3.3" stroke-width="1.9"/><path d="M15.5 14.6h8" stroke-width="1.9"/></svg><div class="a t24" style="left:2369px;top:1225.5px;color:#555">代理机构ID</div>
<!-- badge 2 -->
<div class="a" style="left:2409.6px;top:12.4px;width:57px;height:57px;border-radius:50%;background:#fe5a4a;box-shadow:1px 3px 3px rgba(0,0,0,0.45)"></div>
<div class="a" style="left:2409.6px;top:19.5px;width:57px;text-align:center;font-size:36px;line-height:42px;color:#fff;-webkit-text-stroke:0.6px #fff">2</div>

</body></html>
